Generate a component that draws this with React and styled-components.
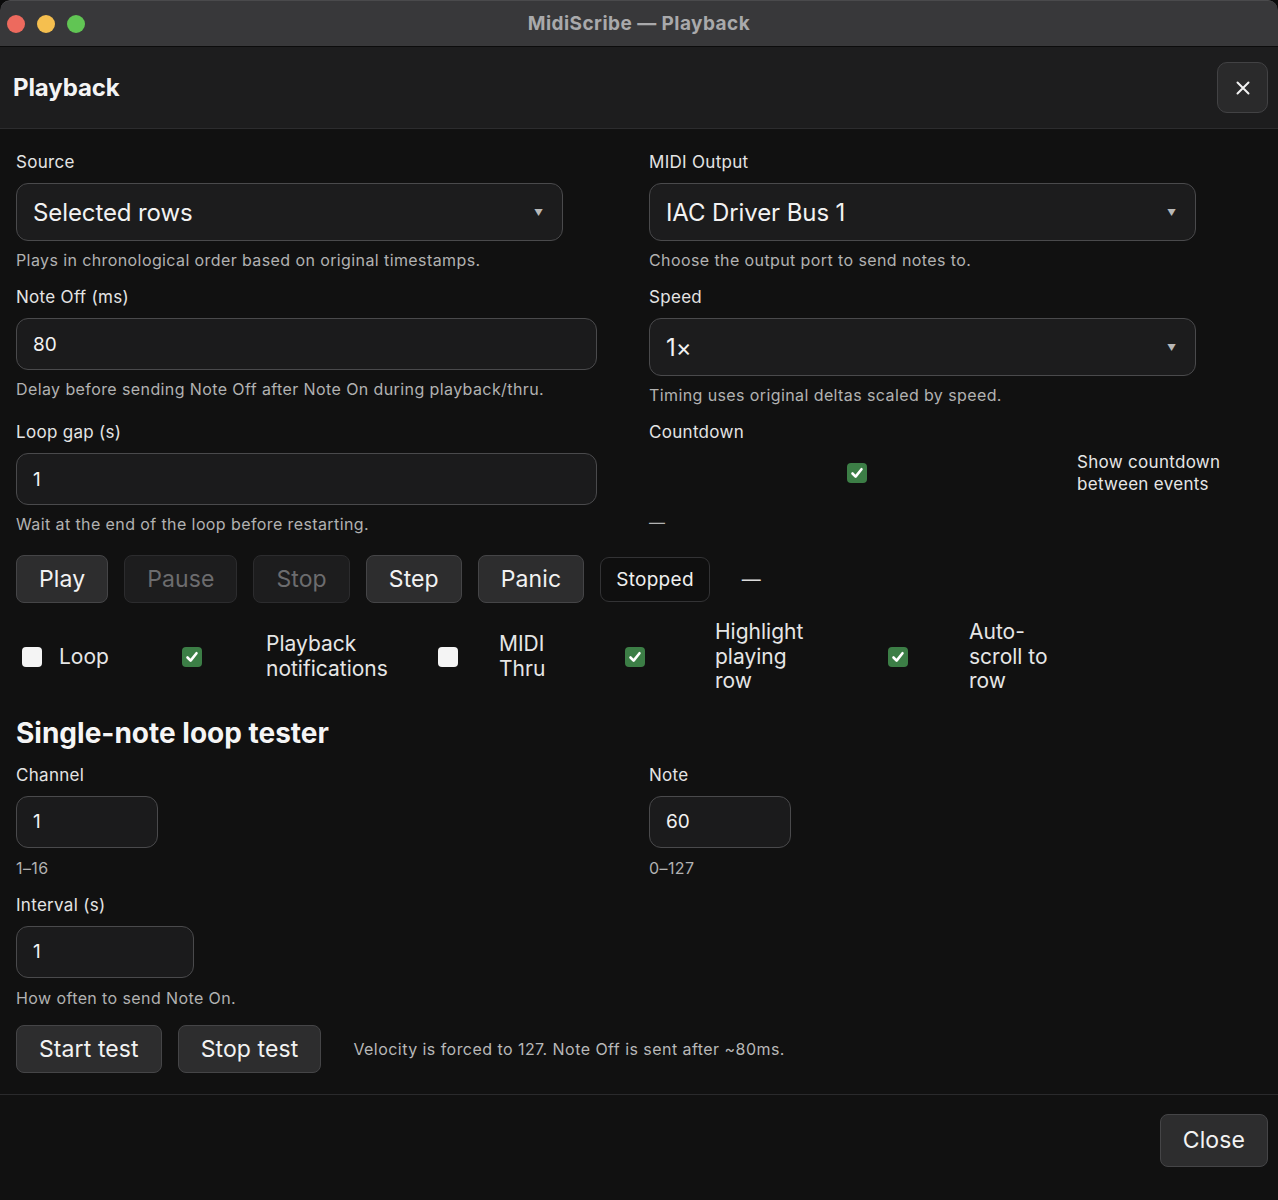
import React from "react";
import styled, { createGlobalStyle } from "styled-components";

const GlobalStyle = createGlobalStyle`
  html, body { margin: 0; padding: 0; background: #0b0b0b; }
  body { font-family: Inter, "Noto Sans", "Liberation Sans", sans-serif; -webkit-font-smoothing: antialiased; }
  * { box-sizing: border-box; }
`;

const Window = styled.div`
  width: 1278px;
  height: 1200px;
  background: #111111;
  display: flex;
  flex-direction: column;
  overflow: hidden;
  border-radius: 10px 10px 0 0;
`;

const TitleBar = styled.div`
  height: 47px;
  flex: none;
  background: #38383a;
  border-bottom: 1px solid #0c0c0c;
  border-top: 1px solid #4a4a4c;
  display: grid;
  grid-template-columns: 1fr auto 1fr;
  align-items: center;
  border-radius: 10px 10px 0 0;
`;

const Lights = styled.div`
  display: flex;
  gap: 12px;
  padding-left: 7px;
`;

const Light = styled.span`
  width: 18px;
  height: 18px;
  border-radius: 50%;
  background: ${(p) => p.$c};
`;

const WindowTitle = styled.div`
  font-size: 19px;
  font-weight: 700;
  color: #a9a9ab;
  letter-spacing: 0.45px;
`;

const Header = styled.div`
  height: 82px;
  flex: none;
  background: #1d1d1e;
  border-bottom: 1px solid #2c2c2e;
  display: flex;
  align-items: center;
  justify-content: space-between;
  padding: 0 10px 0 13px;
`;

const HeaderTitle = styled.h1`
  margin: 0;
  font-size: 24px;
  font-weight: 700;
  color: #f4f4f4;
  letter-spacing: -0.1px;
`;

const IconButton = styled.button`
  width: 51px;
  height: 51px;
  border-radius: 10px;
  background: #2a2a2b;
  border: 1px solid #424244;
  display: flex;
  align-items: center;
  justify-content: center;
  padding: 0;
`;

const Body = styled.div`
  flex: none;
  padding: 22px 16px 21px 16px;
  display: flex;
  flex-direction: column;
`;

const Grid = styled.div`
  display: grid;
  grid-template-columns: 613px 613px;
  column-gap: 20px;
  row-gap: ${(p) => p.$rowGap || 16}px;
  margin-top: ${(p) => p.$mt || 0}px;
  align-items: start;
`;

const Field = styled.div`
  display: flex;
  flex-direction: column;
  align-items: flex-start;
  margin-top: ${(p) => p.$mt || 0}px;
`;

const Label = styled.div`
  font-size: 17px;
  line-height: 22px;
  color: #e4e4e4;
  letter-spacing: 0.3px;
  margin-bottom: 10px;
`;

const SelectBox = styled.div`
  width: 547px;
  height: 58px;
  border: 1px solid #4a4a4c;
  border-radius: 12px;
  background: #1c1c1d;
  padding: 0 19px 0 16px;
  display: flex;
  align-items: center;
  justify-content: space-between;
  font-size: 24px;
  color: #f2f2f2;
  letter-spacing: -0.1px;
`;

const Caret = styled.span`
  font-size: 9px;
  color: #b8b8b8;
`;

const InputBox = styled.div`
  width: ${(p) => p.$w}px;
  height: 52px;
  border: 1px solid #4a4a4c;
  border-radius: 12px;
  background: #1b1b1c;
  padding: 0 16px;
  display: flex;
  align-items: center;
  font-size: 19px;
  color: #f2f2f2;
`;

const Help = styled.div`
  font-size: 16px;
  line-height: 20px;
  color: #b2b2b2;
  letter-spacing: 0.4px;
  margin-top: ${(p) => (p.$mt != null ? p.$mt : 9)}px;
`;

const CountdownRow = styled.div`
  display: flex;
  align-items: center;
  gap: 12px;
  margin-top: -2px;
  width: 100%;
`;

const CheckCell = styled.div`
  width: ${(p) => p.$w}px;
  flex: none;
  display: flex;
  justify-content: center;
  align-items: center;
`;

const CheckLabel = styled.div`
  font-size: ${(p) => p.$size || 17}px;
  line-height: ${(p) => p.$lh || 22}px;
  letter-spacing: ${(p) => p.$ls || 0}px;
  color: #e6e6e6;
  width: ${(p) => (p.$w ? `${p.$w}px` : "auto")};
`;

const Box = styled.span`
  width: 20px;
  height: 20px;
  border-radius: 4px;
  background: ${(p) => (p.$on ? "#3c7e46" : "#f4f4f4")};
  display: inline-flex;
  align-items: center;
  justify-content: center;
`;

const ButtonRow = styled.div`
  display: flex;
  align-items: center;
  gap: 16px;
  margin-top: ${(p) => p.$mt || 0}px;
`;

const Button = styled.button`
  height: ${(p) => p.$h || 48}px;
  padding: 0 22px;
  border-radius: 8px;
  font-family: inherit;
  font-size: 23px;
  letter-spacing: 0.1px;
  background: ${(p) => (p.$disabled ? "#1d1d1e" : "#2d2d2e")};
  border: 1px solid ${(p) => (p.$disabled ? "#2c2c2e" : "#454547")};
  color: ${(p) => (p.$disabled ? "#6c6c6e" : "#f2f2f2")};
`;

const Badge = styled.div`
  height: 45px;
  padding: 0 15px;
  border-radius: 9px;
  border: 1px solid #333335;
  background: #0f0f0f;
  color: #efefef;
  font-size: 19px;
  letter-spacing: 0.3px;
  display: flex;
  align-items: center;
`;

const Dash = styled.span`
  font-size: 19px;
  color: #dcdcdc;
  margin-left: ${(p) => p.$ml || 0}px;
`;

const ChecksRow = styled.div`
  display: flex;
  align-items: center;
  gap: 23px;
  margin-top: 17px;
`;

const CheckItem = styled.div`
  display: flex;
  align-items: center;
  gap: 12px;
`;

const Section = styled.h2`
  margin: 22px 0 0;
  font-size: 28px;
  line-height: 34px;
  font-weight: 700;
  color: #f5f5f5;
  letter-spacing: 0px;
`;

const Note = styled.span`
  font-size: 16px;
  color: #b8b8b8;
  letter-spacing: 0.45px;
  margin-left: 16px;
`;

const Footer = styled.div`
  border-top: 1px solid #2a2a2c;
  padding: 19px 10px;
  display: flex;
  justify-content: flex-end;
`;

function Check({ on }) {
  return (
    <Box $on={on}>
      {on && (
        <svg width="14" height="14" viewBox="0 0 14 14">
          <path d="M2.5 7.5 L5.6 10.6 L11.5 3.2" fill="none" stroke="#fff" strokeWidth="2.6" strokeLinecap="round" strokeLinejoin="round" />
        </svg>
      )}
    </Box>
  );
}

const checks = [
  { on: false, cell: 31, label: ["Loop"], w: 48 },
  { on: true, cell: 124, label: ["Playback", "notifications"], w: 120 },
  { on: false, cell: 78, label: ["MIDI", "Thru"], w: 45 },
  { on: true, cell: 136, label: ["Highlight", "playing", "row"], w: 101 },
  { on: true, cell: 118, label: ["Auto-", "scroll to", "row"], w: 90 },
];

export default function App() {
  return (
    <>
      <GlobalStyle />
      <Window>
        <TitleBar>
          <Lights>
            <Light $c="#ed6a5e" />
            <Light $c="#f5bf4f" />
            <Light $c="#61c554" />
          </Lights>
          <WindowTitle>MidiScribe — Playback</WindowTitle>
          <div />
        </TitleBar>
        <Header>
          <HeaderTitle>Playback</HeaderTitle>
          <IconButton aria-label="Close">
            <svg width="14" height="14" viewBox="0 0 14 14">
              <path d="M1.5 1.5 L12.5 12.5 M12.5 1.5 L1.5 12.5" stroke="#f2f2f2" strokeWidth="2" strokeLinecap="round" />
            </svg>
          </IconButton>
        </Header>
        <Body>
          <Grid>
            <Field>
              <Label>Source</Label>
              <SelectBox>
                <span>Selected rows</span>
                <Caret>▼</Caret>
              </SelectBox>
              <Help>Plays in chronological order based on original timestamps.</Help>
            </Field>
            <Field>
              <Label>MIDI Output</Label>
              <SelectBox>
                <span>IAC Driver Bus 1</span>
                <Caret>▼</Caret>
              </SelectBox>
              <Help>Choose the output port to send notes to.</Help>
            </Field>
            <Field>
              <Label>Note Off (ms)</Label>
              <InputBox $w={581}>80</InputBox>
              <Help>Delay before sending Note Off after Note On during playback/thru.</Help>
            </Field>
            <Field>
              <Label>Speed</Label>
              <SelectBox>
                <span>1×</span>
                <Caret>▼</Caret>
              </SelectBox>
              <Help>Timing uses original deltas scaled by speed.</Help>
            </Field>
            <Field>
              <Label>Loop gap (s)</Label>
              <InputBox $w={581}>1</InputBox>
              <Help>Wait at the end of the loop before restarting.</Help>
            </Field>
            <Field>
              <Label>Countdown</Label>
              <CountdownRow>
                <CheckCell $w={416}>
                  <Check on />
                </CheckCell>
                <CheckLabel $w={185} $ls={0.3}>
                  Show countdown
                  <br />
                  between events
                </CheckLabel>
              </CountdownRow>
              <Help $mt={17}>—</Help>
            </Field>
          </Grid>

          <ButtonRow $mt={21}>
            <Button>Play</Button>
            <Button $disabled>Pause</Button>
            <Button $disabled>Stop</Button>
            <Button>Step</Button>
            <Button>Panic</Button>
            <Badge>Stopped</Badge>
            <Dash $ml={16}>—</Dash>
          </ButtonRow>

          <ChecksRow>
            {checks.map((c, i) => (
              <CheckItem key={i}>
                <CheckCell $w={c.cell}>
                  <Check on={c.on} />
                </CheckCell>
                <CheckLabel $size={21} $lh={24.5} $w={c.w}>
                  {c.label.map((l, j) => (
                    <React.Fragment key={j}>
                      {j > 0 && <br />}
                      {l}
                    </React.Fragment>
                  ))}
                </CheckLabel>
              </CheckItem>
            ))}
          </ChecksRow>

          <Section>Single-note loop tester</Section>

          <Grid $mt={14}>
            <Field>
              <Label>Channel</Label>
              <InputBox $w={142}>1</InputBox>
              <Help $mt={10}>1–16</Help>
            </Field>
            <Field>
              <Label>Note</Label>
              <InputBox $w={142}>60</InputBox>
              <Help $mt={10}>0–127</Help>
            </Field>
          </Grid>

          <Field $mt={16}>
            <Label>Interval (s)</Label>
            <InputBox $w={178}>1</InputBox>
            <Help $mt={10}>How often to send Note On.</Help>
          </Field>

          <ButtonRow $mt={17}>
            <Button>Start test</Button>
            <Button>Stop test</Button>
            <Note>Velocity is forced to 127. Note Off is sent after ~80ms.</Note>
          </ButtonRow>
        </Body>
        <Footer>
          <Button $h={53}>Close</Button>
        </Footer>
      </Window>
    </>
  );
}
